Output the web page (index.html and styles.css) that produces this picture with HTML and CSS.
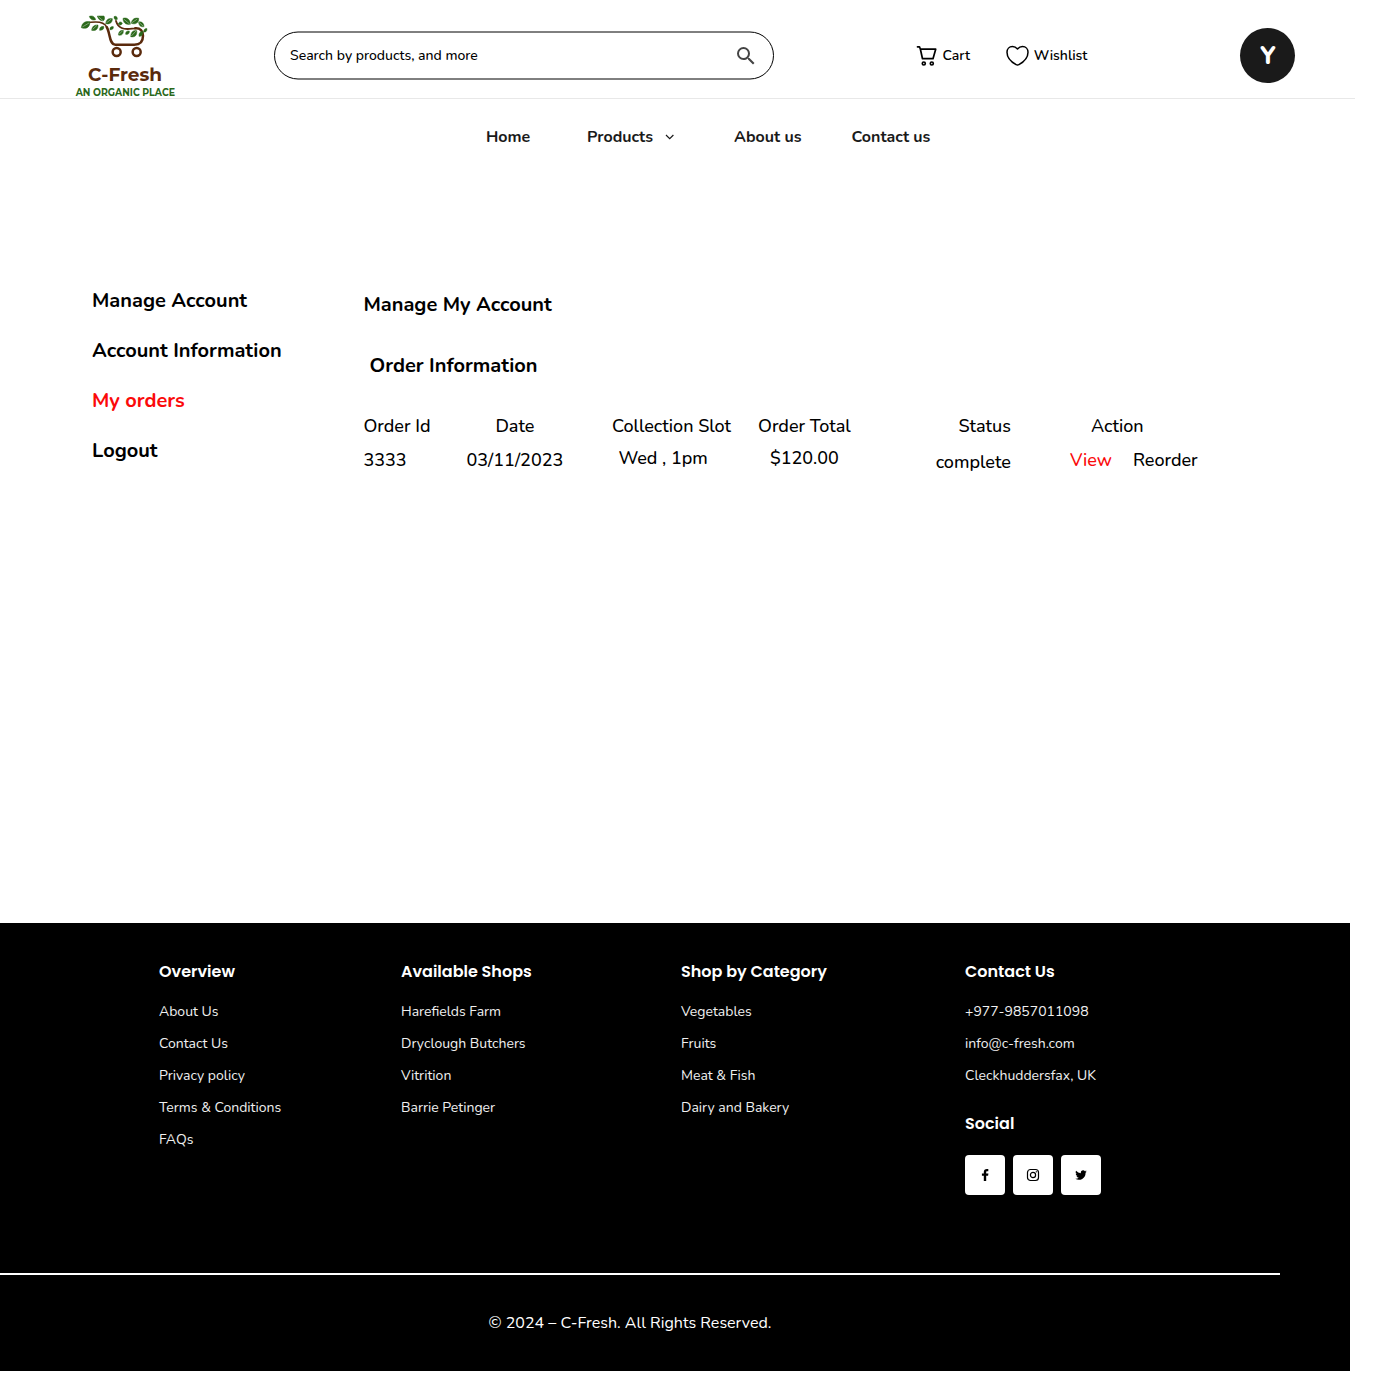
FILE: index.html
```html
<!DOCTYPE html>
<html lang="en">
<head>
<meta charset="utf-8">
<title>C-Fresh – My orders</title>
<link rel="stylesheet" href="styles.css">
</head>
<body>
<header class="header">
  <a class="logo">
    <svg width="120" height="93" viewBox="0 0 360 279">
      <g fill="none" stroke="#5a2a0c" stroke-linecap="round">
        <path stroke-width="4.500" d="M77 52c22-3 40-2 48 14"/>
        <path stroke-width="7.500" d="M125 66c11 17 7 53 26 53h57c18 0 26-11 26-27 0-14-8-23-23-22"/>
        <path stroke-width="5.500" d="M211 70c-14 1-28 5-41-1-9-4-14-11-17-21"/>
        <circle cx="155" cy="141" r="12" stroke-width="7.500"/>
        <circle cx="215" cy="141" r="12" stroke-width="7.500"/>
      </g>
      <g fill="#2a681a" stroke="#2a681a" stroke-width="1.500" stroke-linejoin="round">
        <path d="M49 68c2-15 12-20 26-18 0 16-11 24-26 18z"/>
        <path d="M73 34c9-3 16 0 19 10-9 3-17-1-19-10z"/>
        <path d="M97 33h20c3 6 2 12-3 15-9-1-15-6-17-15z"/>
        <path d="M80 76c1-12 8-17 19-16 1 12-7 19-19 16z"/>
        <path d="M104 76c-1-8 3-12 12-12 2 8-3 12-12 12z"/>
        <path d="M122 56c1-11 8-17 20-15 1 11-8 18-20 15z"/>
        <path d="M135 74c-1-7 3-10 10-9 1 6-3 10-10 9z"/>
        <path d="M147 35c6-3 10 0 10 8-6 3-10 0-10-8z"/>
        <path d="M160 57c2-7 7-8 12-3-2 7-7 8-12 3z"/>
        <path d="M174 40c12-4 22 4 22 18-14 2-22-5-22-18z"/>
        <path d="M199 55c1-12 10-18 22-15 1 12-8 20-22 15z"/>
        <path d="M221 51c9-2 16 4 16 14-10 2-16-4-16-14z"/>
        <path d="M236 81c0-7 3-11 10-10 0 8-4 11-10 10z"/>
        <path d="M160 90c1-10 6-15 15-14 1 11-5 17-15 14z"/>
        <path d="M182 88c-1-7 3-11 11-10 1 8-4 11-11 10z"/>
        <path d="M197 95c1-14 7-20 18-18 2 13-5 21-18 18z"/>
        <path d="M222 94c-1-9 3-14 11-15 2 10-2 16-11 15z"/>
      </g>
      <g stroke="#fff" stroke-width="1.200" fill="none">
        <path d="M52 66l20-12M100 35l14 12M83 73l13-12M124 54l15-12M176 42l18 15M201 53l16-11M223 53l12 11M162 88l11-11M199 93l14-15"/>
      </g>
      <text class="logo-name" x="69" y="229" textLength="222" lengthAdjust="spacingAndGlyphs">C-Fresh</text>
      <text class="logo-tag" x="32" y="272" textLength="298" lengthAdjust="spacingAndGlyphs">AN ORGANIC PLACE</text>
    </svg>
  </a>
  <div class="search">
    <svg class="search-frame" width="501" height="50"><rect x="0.5" y="1" width="499" height="47" rx="23.5" fill="none" stroke="#000"/></svg>
    <span>Search by products, and more</span>
    <svg width="24" height="24" viewBox="0 0 24 24"><path fill="#444" d="M15.5 14h-.79l-.28-.27A6.47 6.47 0 0 0 16 9.5 6.5 6.5 0 1 0 9.500 16c1.610 0 3.090-.59 4.230-1.570l.27.28v.79l5 4.990L20.490 19l-4.990-5zm-6 0a4.500 4.500 0 1 1 0-9 4.500 4.500 0 0 1 0 9z"/></svg>
  </div>
  <div class="links">
    <a class="link"><svg width="22" height="22" viewBox="0 0 22 22" fill="none" stroke="#000" stroke-width="1.700" stroke-linecap="round" stroke-linejoin="round"><path d="M1.500 1.800h2l.9 2.400h15.300l-2.700 9.500H6.500L4.400 4.200"/><circle cx="7.800" cy="18.500" r="1.500"/><circle cx="15.800" cy="18.500" r="1.500"/></svg><span>Cart</span></a>
    <a class="link"><svg width="24" height="22" viewBox="0 0 24 22" fill="none" stroke="#000" stroke-width="1.500" stroke-linejoin="round"><path d="M12.500 4C11 2.200 9.500 1.500 7.500 1.500c-3.400 0-5.500 2.500-5.500 5.700 0 5.500 5.100 10.200 9.100 12.500.9.500 1.900.5 2.800 0 4-2.300 9.100-7 9.100-12.500 0-3.200-2.100-5.700-5.500-5.700-2 0-3.500.7-5 2.500z"/></svg><span>Wishlist</span></a>
  </div>
  <div class="avatar"><svg width="55" height="55" viewBox="0 0 55 55"><text x="28" y="36" text-anchor="middle">Y</text></svg></div>
</header>
<nav class="nav">
  <a class="nav-home">Home</a>
  <a class="nav-products"><span>Products</span><svg width="10" height="6" viewBox="0 0 10 6" fill="none" stroke="#1a1a1a" stroke-width="1.200"><path d="M1 1l3.700 3.700L8.400 1"/></svg></a>
  <a class="nav-about">About us</a>
  <a>Contact us</a>
</nav>
<main class="main">
  <aside class="side">
    <a>Manage Account</a>
    <a>Account Information</a>
    <a class="active">My orders</a>
    <a>Logout</a>
  </aside>
  <section class="content">
    <h1>Manage My Account</h1>
    <h2>Order Information</h2>
    <div class="orders">
      <div class="col col-id"><span>Order Id</span><span>3333</span></div>
      <div class="col col-date"><span>Date</span><span>03/11/2023</span></div>
      <div class="col col-slot"><span>Collection Slot</span><span>Wed , 1pm</span></div>
      <div class="col col-total"><span>Order Total</span><span>$120.00</span></div>
      <div class="col col-status"><span>Status</span><span>complete</span></div>
      <div class="col col-action"><span>Action</span><div class="actions"><a class="active">View</a><a>Reorder</a></div></div>
    </div>
  </section>
</main>
<footer class="footer">
  <div class="footer-cols">
    <div class="fcol"><h3>Overview</h3><a>About Us</a><a>Contact Us</a><a>Privacy policy</a><a>Terms &amp; Conditions</a><a>FAQs</a></div>
    <div class="fcol"><h3>Available Shops</h3><a>Harefields Farm</a><a>Dryclough Butchers</a><a>Vitrition</a><a>Barrie Petinger</a></div>
    <div class="fcol"><h3>Shop by Category</h3><a>Vegetables</a><a>Fruits</a><a>Meat &amp; Fish</a><a>Dairy and Bakery</a></div>
    <div class="fcol"><h3>Contact Us</h3><a>+977-9857011098</a><a>info@c-fresh.com</a><a>Cleckhuddersfax, UK</a>
      <h3 class="social-title">Social</h3>
      <div class="social">
        <a><svg width="14" height="14" viewBox="0 0 14 14"><path d="M8.200 13V7.700h1.900l.3-2.100H8.200V4.300c0-.6.2-1 1.100-1h1V1.100C10 1 9.500.9 8.900.9 7 .9 5.800 2 5.800 4v1.600H3.900v2.100h1.900V13z"/></svg></a>
        <a><svg width="14" height="14" viewBox="0 0 14 14" fill="none" stroke="#000" stroke-width="1.200"><rect x="1.500" y="1.500" width="11" height="11" rx="3"/><circle cx="7" cy="7" r="2.600"/><circle cx="10.300" cy="3.800" r=".4" fill="#000" stroke-width=".6"/></svg></a>
        <a><svg width="12" height="12" viewBox="1 1 22 22"><path d="M22.500 5.500c-.8.400-1.600.6-2.500.7.900-.5 1.600-1.400 1.900-2.400-.8.500-1.800.9-2.700 1.100a4.300 4.300 0 0 0-7.400 3.900A12.200 12.200 0 0 1 3 4.300a4.300 4.300 0 0 0 1.300 5.800c-.7 0-1.400-.2-1.900-.5v.1c0 2.100 1.500 3.800 3.400 4.200-.6.2-1.300.2-1.900.1.500 1.700 2.100 2.900 4 3a8.600 8.600 0 0 1-6.400 1.800A12.200 12.200 0 0 0 20.300 7.900c.9-.6 1.600-1.400 2.200-2.400z"/></svg></a>
      </div>
    </div>
  </div>
  <div class="rule"></div>
  <p class="copy">© 2024 – C-Fresh. All Rights Reserved.</p>
</footer>
</body>
</html>
```
FILE: styles.css
```css
* { box-sizing: border-box; }
body { margin: 0; background: #fff; color: #000; font-family: Nunito, Lato, sans-serif; font-size: 14px; line-height: 20px; }
h1, h2, h3, p { margin: 0; }
a, span, h3 { white-space: nowrap; }
svg { display: block; flex: none; }

.header { width: 1355px; height: 99px; border-bottom: 1px solid #e8e8e8; display: flex; padding-left: 65px; }
.logo { width: 120px; padding-top: 5px; }
.logo-name { font: 700 55px Montserrat, Inter, sans-serif; fill: #5a2a0c; }
.logo-tag { font: 700 31px Montserrat, Inter, sans-serif; fill: #2a681a; }
.search { position: relative; width: 500px; height: 50px; margin: 31px 0 0 89px; padding: 0 16px; display: flex; align-items: center; justify-content: space-between; font-weight: 500; }
.search-frame { position: absolute; left: 0; top: 0; }
.links { display: flex; gap: 35px; margin: 45px 0 0 142px; height: 22px; font-weight: 600; }
.link { display: flex; align-items: center; gap: 4.6px; }
.avatar { width: 55px; height: 55px; margin: 28px 60px 0 auto; border-radius: 50%; background: #1a1a1a; }
.avatar text { font: 800 25px Nunito, Lato, sans-serif; fill: #fff; }

.nav { display: flex; height: 76px; align-items: center; padding-left: 486px; font-size: 16px; font-weight: 700; color: #1a1a1a; }
.nav-home { width: 101px; }
.nav-products { width: 147px; display: flex; align-items: center; gap: 12px; }
.nav-about { width: 117.5px; }

.main { display: flex; height: 748px; padding: 111px 0 0 92px; }
.side { width: 271.4px; display: flex; flex-direction: column; gap: 30px; padding-top: 5px; font-size: 20px; font-weight: 700; }
.active { color: #fb0a0a; }
.content h1, .content h2 { font-size: 20px; line-height: 20px; font-weight: 700; }
.content h1 { padding-top: 9px; }
.content h2 { padding: 41px 0 0 6.2px; }
.orders { display: flex; margin-top: 40px; font-size: 18px; font-weight: 500; }
.col { display: flex; flex-direction: column; gap: 14px; }
.col-id { width: 103px; }
.col-date { width: 97px; align-items: center; }
.col-slot { width: 119px; margin-left: 48.5px; gap: 12px; }
.col-slot span + span { padding-left: 6.5px; }
.col-total { width: 93px; margin-left: 27px; gap: 12px; align-items: center; }
.col-status { width: 160px; align-items: flex-end; gap: 16px; }
.col-action { width: 128px; margin-left: 59px; }
.col-action > span { padding-left: 21px; }
.actions { display: flex; gap: 21px; }

.footer { width: 1350px; height: 448px; background: #000; color: #fff; }
.footer-cols { height: 350px; display: grid; grid-template-columns: 242px 280px 284px 1fr; padding: 39px 0 0 159px; }
.fcol { display: flex; flex-direction: column; gap: 12px; }
.fcol h3 { font: 600 16px/20px Poppins, Inter, sans-serif; margin-bottom: 8px; }
.fcol .social-title { margin: 16px 0 9px; }
.fcol > a { color: #f0f0f0; }
.social { display: flex; gap: 8px; }
.social a { width: 40px; height: 40px; border-radius: 4px; background: #fff; display: grid; place-items: center; }
.rule { width: 1280px; height: 2px; background: #fff; }
.copy { width: 1260px; padding-top: 38px; text-align: center; font-size: 16px; }
```
